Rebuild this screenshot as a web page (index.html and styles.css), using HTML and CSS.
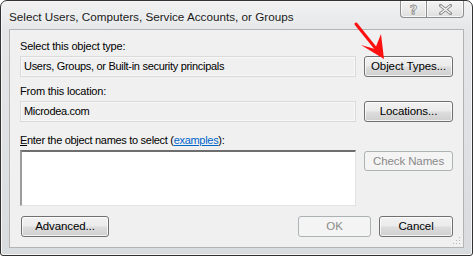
FILE: index.html
```html
<!DOCTYPE html>
<html>
<head>
<meta charset="utf-8">
<link rel="stylesheet" href="styles.css">
</head>
<body>
<div class="window">
  <div class="titlebar">
    <span class="title">Select Users, Computers, Service Accounts, or Groups</span>
    <div class="caption-buttons">
      <div class="cap-btn help">?</div>
      <div class="cap-btn close">
        <svg width="13" height="11" viewBox="0 0 13 11"><path d="M1.5 1.5 L11.5 9.5 M11.5 1.5 L1.5 9.5" stroke="#8a8a8a" stroke-width="3" stroke-linecap="square" fill="none"/><path d="M1.5 1.5 L11.5 9.5 M11.5 1.5 L1.5 9.5" stroke="#fafafa" stroke-width="1.2" fill="none"/></svg>
      </div>
    </div>
  </div>
  <div class="client">
    <div class="label">Select this object type:</div>
    <div class="row">
      <div class="field">Users, Groups, or Built-in security principals</div>
      <div class="btn">Object Types...</div>
    </div>
    <div class="label second">From this location:</div>
    <div class="row">
      <div class="field">Microdea.com</div>
      <div class="btn">Locations...</div>
    </div>
    <div class="label third"><u>E</u>nter the object names to select (<a class="link">examples</a>):</div>
    <div class="row top">
      <div class="textarea"></div>
      <div class="btn disabled check">Check Names</div>
    </div>
    <div class="footer">
      <div class="btn adv">Advanced...</div>
      <div class="btn disabled ok">OK</div>
      <div class="btn cancel">Cancel</div>
    </div>
    <svg class="grip" width="8" height="8" viewBox="0 0 8 8">
      <rect x="6" y="0" width="1" height="1" fill="#b5b5b5"/>
      <rect x="3" y="3" width="1" height="1" fill="#b5b5b5"/>
      <rect x="6" y="3" width="1" height="1" fill="#b5b5b5"/>
      <rect x="0" y="6" width="1" height="1" fill="#b5b5b5"/>
      <rect x="3" y="6" width="1" height="1" fill="#b5b5b5"/>
      <rect x="6" y="6" width="1" height="1" fill="#b5b5b5"/>
    </svg>
  </div>
  <svg class="arrow" width="473" height="256" viewBox="0 0 473 256">
    <line x1="356" y1="24" x2="377" y2="50" stroke="#ff1010" stroke-width="3" stroke-linecap="round"/>
    <polygon points="384,59 361,45 375,49 381,34" fill="#ff1010"/>
  </svg>
</div>
</body>
</html>
```
FILE: styles.css
```css
html, body {
  margin: 0;
  padding: 0;
  background: #ffffff;
}
body {
  font-family: "Liberation Sans", Arial, sans-serif;
  font-size: 11px;
  color: #000;
}
.window {
  position: relative;
  width: 473px;
  height: 256px;
  box-sizing: border-box;
  border: 1px solid #333333;
  border-radius: 7px 7px 3px 3px;
  background: linear-gradient(180deg, #f2f2f2 0%, #e4e6e8 12%, #d9dcdf 100%);
  box-shadow: inset 0 0 0 1px #f6f6f6;
  display: flex;
  flex-direction: column;
  overflow: hidden;
}
.titlebar {
  height: 28px;
  flex: 0 0 28px;
  display: flex;
  align-items: flex-start;
  padding-left: 8px;
  box-sizing: border-box;
}
.title {
  font-size: 11.7px;
  line-height: 16px;
  padding-top: 8px;
  color: #1a1a1a;
  text-shadow: 0 0 6px rgba(255,255,255,0.9);
  white-space: nowrap;
}
.caption-buttons {
  margin-left: auto;
  margin-right: 8px;
  display: flex;
}
.cap-btn {
  height: 17px;
  box-sizing: border-box;
  border: 1px solid #8e8e8e;
  border-top: none;
  background: linear-gradient(180deg, #f3f3f3 0%, #ebebeb 50%, #dedede 100%);
  box-shadow: inset 0 0 0 1px rgba(255,255,255,0.7);
  display: flex;
  align-items: center;
  justify-content: center;
}
.help {
  width: 26px;
  border-radius: 0 0 0 4px;
  border-right: none;
  font-family: "DejaVu Sans", sans-serif;
  font-size: 13px;
  font-weight: bold;
  color: #fbfbfb;
  -webkit-text-stroke: 0.8px #8a8a8a;
  line-height: 15px;
}
.close {
  width: 38px;
  border-radius: 0 0 4px 0;
}
.client {
  position: relative;
  margin: 0 8px;
  height: 219px;
  box-sizing: border-box;
  border: 1px solid #b4b4b4;
  background: #f0f0f0;
  padding: 9px 10px 0 10px;
}
.label {
  height: 15px;
  line-height: 15px;
  margin-bottom: 2px;
  letter-spacing: -0.2px;
  white-space: nowrap;
}
.label.second {
  margin-top: 7px;
}
.label.third {
  margin-top: 11px;
  margin-bottom: 2px;
  letter-spacing: -0.3px;
}
.link {
  color: #0066cc;
  text-decoration: underline;
}
.row {
  display: flex;
  gap: 8px;
  align-items: center;
}
.row.top {
  align-items: flex-start;
}
.field {
  flex: 1;
  height: 21px;
  box-sizing: border-box;
  border: 1px solid #dadada;
  box-shadow: inset 0 0 0 1px #f7f7f7;
  background: #f0f0f0;
  line-height: 19px;
  padding-left: 3px;
  letter-spacing: -0.3px;
  white-space: nowrap;
}
.textarea {
  flex: 1;
  height: 56px;
  box-sizing: border-box;
  background: #ffffff;
  border-top: 2px solid #6e6e6e;
  border-left: 2px solid #9c9c9c;
  border-right: 1px solid #e2e2e2;
  border-bottom: 1px solid #e2e2e2;
}
.btn {
  width: 89px;
  height: 21px;
  box-sizing: border-box;
  border: 1px solid #707070;
  border-radius: 3px;
  background: linear-gradient(180deg, #f2f2f2 0%, #ebebeb 48%, #dddddd 52%, #cfcfcf 100%);
  box-shadow: inset 0 0 0 1px rgba(255,255,255,0.75);
  text-align: center;
  line-height: 19px;
  font-size: 11.5px;
  color: #000;
  letter-spacing: -0.1px;
  white-space: nowrap;
}
.btn.disabled {
  border-color: #adb2b5;
  background: #f4f4f4;
  box-shadow: none;
  color: #8a8a8a;
}
.check {
  margin-top: 1px;
  height: 20px;
}
.footer {
  display: flex;
  margin-top: 10px;
  padding-left: 1px;
}
.adv {
  width: 88px;
}
.ok {
  margin-left: auto;
  width: 73px;
}
.cancel {
  margin-left: 8px;
  width: 74px;
}
.grip {
  position: absolute;
  right: 2px;
  bottom: 2px;
}
.arrow {
  position: absolute;
  left: -1px;
  top: -1px;
  pointer-events: none;
}
```
